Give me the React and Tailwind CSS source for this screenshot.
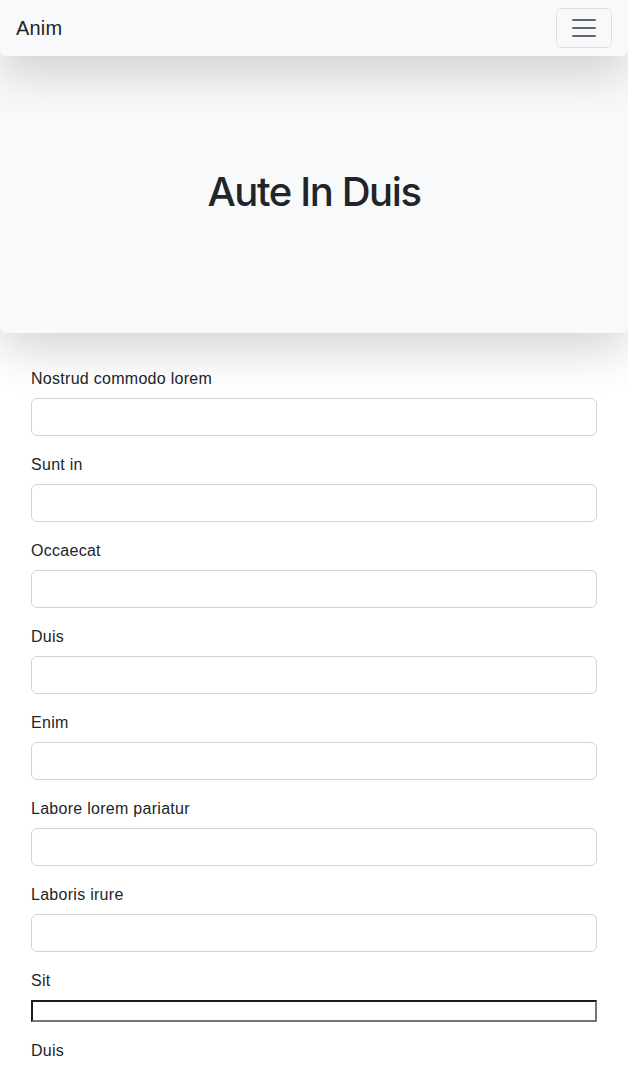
import React from "react";

const fields = [
  "Nostrud commodo lorem",
  "Sunt in",
  "Occaecat",
  "Duis",
  "Enim",
  "Labore lorem pariatur",
  "Laboris irure",
];

const App = () => {
  return (
    <div className="min-h-screen bg-white text-[#212529] font-['Liberation_Sans',Arial,sans-serif]">
      {/* Navbar */}
      <nav className="relative z-20 flex h-[56px] items-center justify-between rounded-md bg-[#f8f9fa] pl-4 pr-4 shadow-[0_16px_48px_rgba(0,0,0,0.175)]">
        <span className="text-[20px] leading-[30px] tracking-[0.2px]">Anim</span>
        <button className="flex h-[40px] w-[56px] items-center justify-center rounded-md border border-[rgba(0,0,0,0.1)]">
          <svg width="30" height="30" viewBox="0 0 30 30">
            <path
              d="M4 7h22M4 15h22M4 23h22"
              stroke="rgba(33,37,41,0.7)"
              strokeWidth="2"
              strokeLinecap="round"
            />
          </svg>
        </button>
      </nav>

      {/* Hero */}
      <div className="relative z-10 flex h-[277px] items-center justify-center rounded-md bg-[#f8f9fa] pb-[6px] shadow-[0_16px_48px_rgba(0,0,0,0.175)]">
        <h1 className="text-[40px] font-medium leading-[48px] font-['Inter',sans-serif] tracking-[-1.4px]">
          Aute In Duis
        </h1>
      </div>

      {/* Form */}
      <form className="px-[31px] pt-[33px]">
        {fields.map((label, i) => (
          <div key={i} className="mb-4">
            <label className="mb-2 block pt-[1px] pb-[-1px] text-base leading-[23px] tracking-[0.28px]">{label}</label>
            <input
              type="text"
              className="block h-[38px] w-full rounded-md border border-[#ced4da] bg-white px-3"
            />
          </div>
        ))}
        <div className="mb-4">
          <label className="mb-2 block pt-[1px] text-base leading-[23px] tracking-[0.28px]">Sit</label>
          <input
            type="text"
            className="block h-[22px] w-full border-2 border-t-[#1a1a1a] border-l-[#1a1a1a] border-b-[#767676] border-r-[#767676] bg-white"
          />
        </div>
        <div className="mb-4">
          <label className="mb-2 block pt-[1px] text-base leading-[23px] tracking-[0.28px]">Duis</label>
        </div>
      </form>
    </div>
  );
};

export default App;
